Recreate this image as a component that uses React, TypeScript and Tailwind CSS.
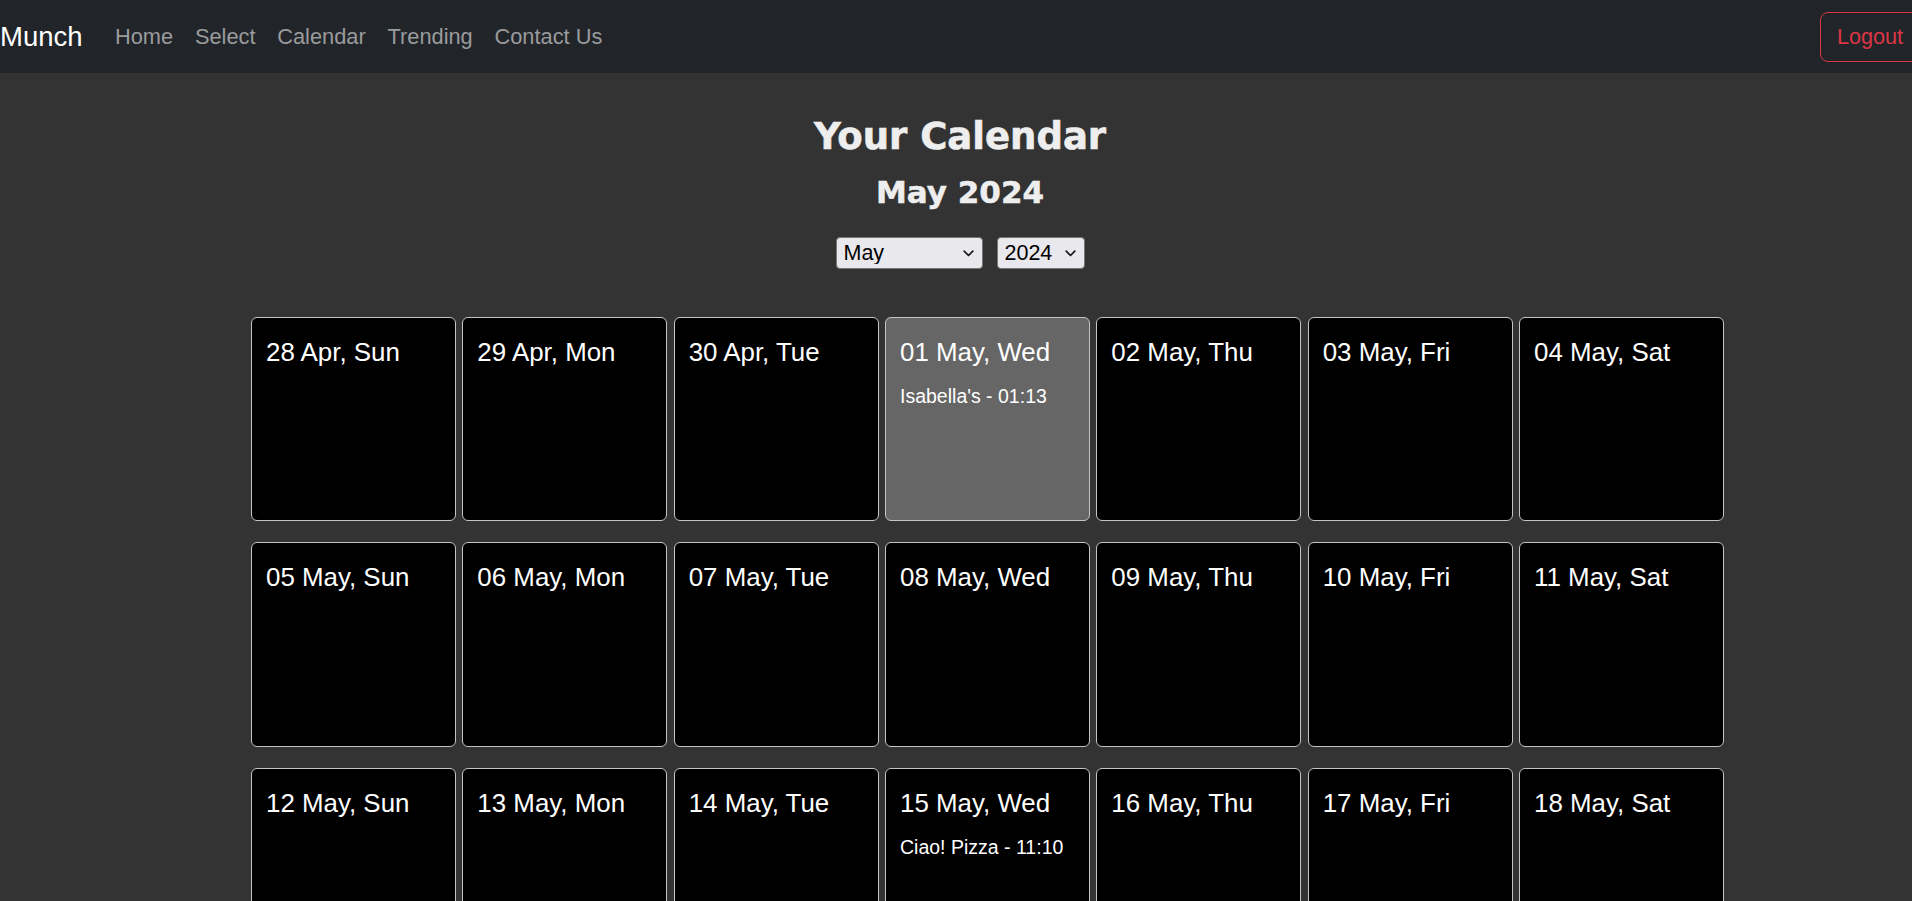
import React from "react";

const MONTHS = ["Jan", "Feb", "Mar", "Apr", "May", "Jun", "Jul", "Aug", "Sep", "Oct", "Nov", "Dec"];
const FULL_MONTHS = [
  "January", "February", "March", "April", "May", "June",
  "July", "August", "September", "October", "November", "December",
];
const DAYS = ["Sun", "Mon", "Tue", "Wed", "Thu", "Fri", "Sat"];

const EVENTS: Record<string, string> = {
  "2024-4-1": "Isabella's - 01:13",
  "2024-4-15": "Ciao! Pizza - 11:10",
};

const HIGHLIGHT = "2024-4-1";

function Chevron() {
  return (
    <svg width="11" height="7" viewBox="0 0 11 7" fill="none">
      <path
        d="M1.2 1.2L5.5 5.5L9.8 1.2"
        stroke="#1a1a1a"
        strokeWidth="1.7"
        strokeLinecap="round"
        strokeLinejoin="round"
      />
    </svg>
  );
}

function buildCells() {
  const cells: { key: string; label: string; event?: string }[] = [];
  const d = new Date(2024, 3, 28);
  for (let i = 0; i < 35; i++) {
    const day = String(d.getDate()).padStart(2, "0");
    const key = `${d.getFullYear()}-${d.getMonth()}-${d.getDate()}`;
    cells.push({
      key,
      label: `${day} ${MONTHS[d.getMonth()]}, ${DAYS[d.getDay()]}`,
      event: EVENTS[key],
    });
    d.setDate(d.getDate() + 1);
  }
  return cells;
}

export default function App() {
  const cells = buildCells();
  const years = [2022, 2023, 2024, 2025, 2026];

  return (
    <div className="min-h-screen bg-[#333333] font-['Liberation_Sans',Arial,sans-serif]">
      <nav className="h-[73px] bg-[#212529] flex items-center overflow-hidden">
        <span className="text-[27.5px] leading-[40px] text-white mr-[21.5px]">Munch</span>
        {["Home", "Select", "Calendar", "Trending", "Contact Us"].map((l) => (
          <a
            key={l}
            className="px-[10.9px] text-[21.8px] leading-[32px] text-[#9a9b9d] cursor-pointer"
          >
            {l}
          </a>
        ))}
        <button className="ml-auto -mr-[8px] h-[50px] px-[16px] border border-[#dc3545] rounded-[8px] text-[#dc3545] text-[21.6px] leading-[32px] bg-transparent">
          Logout
        </button>
      </nav>

      <main className="pb-[60px]">
        <div className="pl-[8px] text-center">
          <h1 className="mt-[41.5px] text-[37px] leading-[44px] font-bold text-[#eeeeee] font-['DejaVu_Sans',sans-serif] [-webkit-text-stroke:0.6px_#eeeeee]">
            Your Calendar
          </h1>
          <h2 className="mt-[14.5px] text-[31px] leading-[38px] font-bold text-[#eeeeee] font-['DejaVu_Sans',sans-serif] [-webkit-text-stroke:0.5px_#eeeeee]">
            May 2024
          </h2>
          <div className="mt-[26px] flex justify-center gap-[14px]">
            <div className="relative w-[147px] h-[31.5px]">
              <select
                defaultValue="4"
                className="appearance-none w-full h-full bg-[#e9e8ed] border border-[#767676] rounded-[4px] pl-[7px] pr-[20px] pt-[1px] text-[21.5px] leading-none text-black outline-none"
              >
                {FULL_MONTHS.map((m, i) => (
                  <option key={m} value={String(i)}>
                    {m}
                  </option>
                ))}
              </select>
              <span className="pointer-events-none absolute right-[9px] top-[13px] flex">
                <Chevron />
              </span>
            </div>
            <div className="relative w-[88px] h-[31.5px]">
              <select
                defaultValue="2024"
                className="appearance-none w-full h-full bg-[#e9e8ed] border border-[#767676] rounded-[4px] pl-[7px] pr-[20px] pt-[1px] text-[21.5px] leading-none text-black outline-none"
              >
                {years.map((y) => (
                  <option key={y} value={String(y)}>
                    {y}
                  </option>
                ))}
              </select>
              <span className="pointer-events-none absolute right-[9px] top-[13px] flex">
                <Chevron />
              </span>
            </div>
          </div>
        </div>

        <div className="mt-[48px] ml-[251px] w-[1473px] grid grid-cols-7 gap-x-[6.4px] gap-y-[21px]">
          {cells.map((c) => (
            <div
              key={c.key}
              className={
                "h-[204.5px] rounded-[6px] border border-[#c4c4c4] pt-[19px] pl-[14px] pr-[10px] text-white " +
                (c.key === HIGHLIGHT ? "bg-[#666666]" : "bg-black")
              }
            >
              <div className="text-[25.9px] leading-[30px]">{c.label}</div>
              {c.event && (
                <div className="mt-[17.5px] text-[19.5px] leading-[24px]">{c.event}</div>
              )}
            </div>
          ))}
        </div>
      </main>
    </div>
  );
}
